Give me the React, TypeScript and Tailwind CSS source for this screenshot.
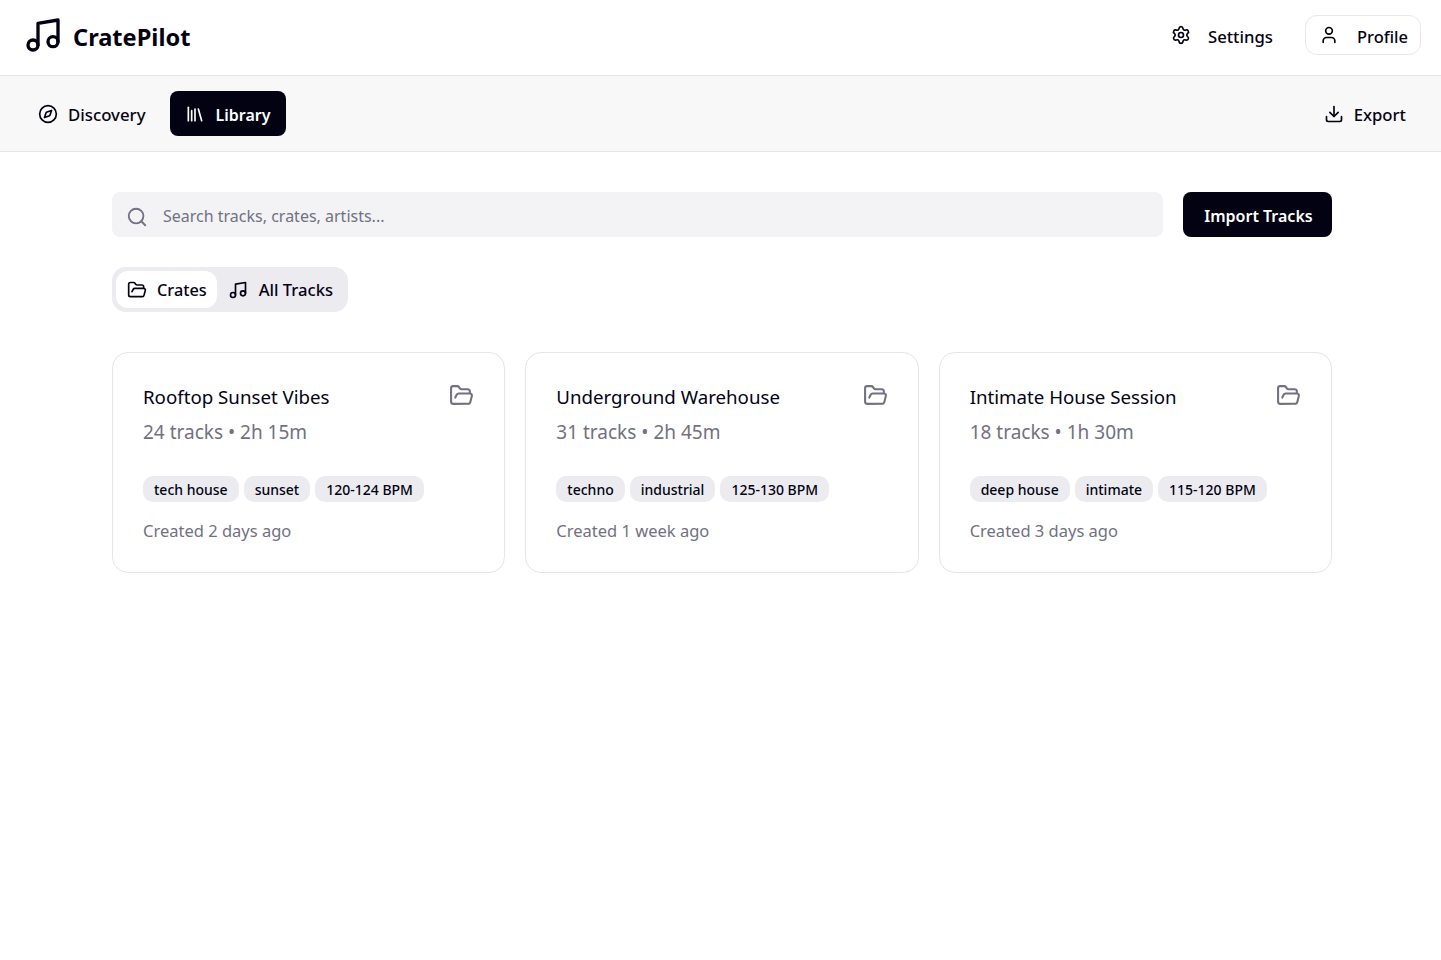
import React from 'react';
import { Music, Compass, Library, Settings, User, Download, Search, FolderOpen } from 'lucide-react';

const crates = [
  { name: 'Rooftop Sunset Vibes', meta: '24 tracks • 2h 15m', tags: ['tech house', 'sunset', '120-124 BPM'], created: 'Created 2 days ago' },
  { name: 'Underground Warehouse', meta: '31 tracks • 2h 45m', tags: ['techno', 'industrial', '125-130 BPM'], created: 'Created 1 week ago' },
  { name: 'Intimate House Session', meta: '18 tracks • 1h 30m', tags: ['deep house', 'intimate', '115-120 BPM'], created: 'Created 3 days ago' },
];

const App: React.FC = () => {
  return (
    <div className="min-h-screen bg-white text-[#030213] font-['Noto_Sans',sans-serif]">
      {/* Header */}
      <header className="h-[76px] border-b border-[#e5e5e5] flex items-center justify-between pl-[23px] pr-5 pb-[5px]">
        <div className="flex items-center gap-[10px]">
          <Music size={40} strokeWidth={2} />
          <span className="text-[23.6px] font-bold pt-[5px]">CratePilot</span>
        </div>
        <div className="flex items-center gap-4">
          <button className="h-10 px-4 flex items-center gap-[17px] font-medium text-[16.7px] rounded-xl">
            <Settings size={20} />
            <span className="pt-[4px]">Settings</span>
          </button>
          <button className="h-10 pl-[13px] pr-3 flex items-center gap-[18px] font-medium text-[16.5px] rounded-xl border border-[#e8e8e8]">
            <User size={20} />
            <span className="pt-[4px]">Profile</span>
          </button>
        </div>
      </header>

      {/* Nav */}
      <nav className="h-[76px] bg-[#f8f8f8] border-b border-[#e5e5e5] flex items-center justify-between pl-6 pr-6">
        <div className="flex items-center gap-[10px]">
          <button className="h-[45px] px-3.5 flex items-center gap-[10px] font-medium text-[16.8px] rounded-lg">
            <Compass size={20} />
            <span className="pt-[2px]">Discovery</span>
          </button>
          <button className="h-[45px] pl-[15px] pr-[15px] flex items-center gap-[11px] font-semibold text-[16px] rounded-lg bg-[#030213] text-white">
            <Library size={20} />
            <span className="pt-[2px]">Library</span>
          </button>
        </div>
        <button className="h-[45px] pl-3.5 pr-[11px] flex items-center gap-[10px] font-medium text-[16.7px] rounded-lg">
          <Download size={20} />
          <span className="pt-[2px]">Export</span>
        </button>
      </nav>

      {/* Main */}
      <main className="ml-[112px] w-[1220px] pt-10">
        <div className="flex items-center gap-5">
          <div className="flex-1 h-[45px] bg-[#f3f3f5] rounded-lg flex items-center pl-[14px] gap-[15px]">
            <Search size={22} className="text-[#717182] mt-1" />
            <span className="text-[#717182] text-base pt-[2px]">Search tracks, crates, artists...</span>
          </div>
          <button className="h-[45px] w-[149px] pl-[2px] pt-[2px] rounded-lg bg-[#030213] text-white font-semibold text-[16px]">Import Tracks</button>
        </div>

        <div className="mt-[30px] inline-flex h-[45px] items-center bg-[#ececf0] rounded-[14px] px-1">
          <div className="h-[37px] pl-[11px] pr-[10px] flex items-center gap-[10px] bg-white rounded-xl font-medium text-[16.3px]">
            <FolderOpen size={20} />
            <span className="pt-[2px]">Crates</span>
          </div>
          <div className="h-[37px] pl-[11px] pr-[11px] flex items-center gap-[11px] font-medium text-[16.6px]">
            <Music size={20} />
            <span className="pt-[2px]">All Tracks</span>
          </div>
        </div>

        <div className="mt-10 grid grid-cols-3 gap-5">
          {crates.map((c) => (
            <div key={c.name} className="h-[221px] rounded-2xl border border-[#e5e5e5] bg-white pt-[30px] px-[30px]">
              <div className="flex justify-between">
                <div>
                  <h3 className="text-[18.7px] leading-7">{c.name}</h3>
                  <p className="text-[19px] leading-7 mt-[7px] text-[#717182]">{c.meta}</p>
                </div>
                <FolderOpen size={25} className="text-[#717182]" />
              </div>
              <div className="mt-[30px] flex gap-[5px]">
                {c.tags.map((t) => (
                  <span key={t} className="h-[26px] px-[11px] pt-[2px] flex items-center rounded-[10px] bg-[#ececf0] text-sm font-medium">{t}</span>
                ))}
              </div>
              <p className="mt-[17px] text-[16.5px] text-[#717182]">{c.created}</p>
            </div>
          ))}
        </div>
      </main>
    </div>
  );
};

export default App;
